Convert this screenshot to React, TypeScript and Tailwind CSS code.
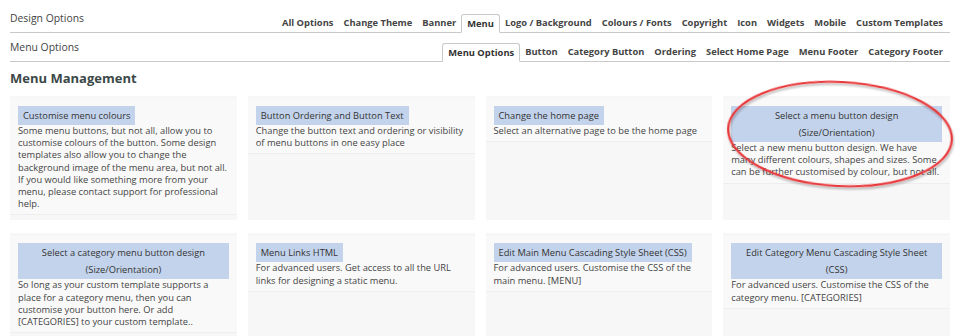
const mainTabs = [
  "All Options",
  "Change Theme",
  "Banner",
  "Menu",
  "Logo / Background",
  "Colours / Fonts",
  "Copyright",
  "Icon",
  "Widgets",
  "Mobile",
  "Custom Templates",
];

const menuTabs = [
  "Menu Options",
  "Button",
  "Category Button",
  "Ordering",
  "Select Home Page",
  "Menu Footer",
  "Category Footer",
];

interface Card {
  title: string;
  text: string;
  narrow?: boolean;
}

const cards: Card[] = [
  {
    title: "Customise menu colours",
    text: "Some menu buttons, but not all, allow you to customise colours of the button. Some design templates also allow you to change the background image of the menu area, but not all. If you would like something more from your menu, please contact support for professional help.",
  },
  {
    title: "Button Ordering and Button Text",
    text: "Change the button text and ordering or visibility of menu buttons in one easy place",
  },
  {
    title: "Change the home page",
    text: "Select an alternative page to be the home page",
  },
  {
    title: "Select a menu button design (Size/Orientation)",
    text: "Select a new menu button design. We have many different colours, shapes and sizes. Some can be further customised by colour, but not all.",
    narrow: true,
  },
  {
    title: "Select a category menu button design (Size/Orientation)",
    text: "So long as your custom template supports a place for a category menu, then you can customise your button here. Or add [CATEGORIES] to your custom template..",
  },
  {
    title: "Menu Links HTML",
    text: "For advanced users. Get access to all the URL links for designing a static menu.",
  },
  {
    title: "Edit Main Menu Cascading Style Sheet (CSS)",
    text: "For advanced users. Customise the CSS of the main menu. [MENU]",
  },
  {
    title: "Edit Category Menu Cascading Style Sheet (CSS)",
    text: "For advanced users. Customise the CSS of the category menu. [CATEGORIES]",
  },
];

function TabRow({ label, tabs, active }: { label: string; tabs: string[]; active: string }) {
  return (
    <div className="flex justify-between items-end h-[25px] border-b border-[#c9c9c9]">
      <div className="self-start text-[10.4px] leading-[20px] text-[#444]">{label}</div>
      <div className="flex items-end mr-[2px]">
        {tabs.map((t) =>
          t === active ? (
            <div
              key={t}
              className="h-[19px] -mb-px px-[5px] leading-[18px] text-[9.35px] font-bold text-[#333] bg-white border border-[#c9c9c9] border-b-white rounded-t-[3px]"
            >
              {t}
            </div>
          ) : (
            <div key={t} className="h-[19px] px-[5px] leading-[19px] text-[9.35px] font-bold text-[#444]">
              {t}
            </div>
          )
        )}
      </div>
    </div>
  );
}

export default function App() {
  return (
    <div className="relative w-[960px] h-[336px] overflow-hidden bg-white px-[10px] pt-[8px] font-['Open_Sans',sans-serif]">
      <TabRow label="Design Options" tabs={mainTabs} active="Menu" />
      <div className="pt-[4px]">
        <TabRow label="Menu Options" tabs={menuTabs} active="Menu Options" />
      </div>

      <h1 className="mt-[6px] mb-[8px] text-[13px] leading-[20px] font-bold text-[#3b4848]">Menu Management</h1>

      <div className="grid grid-cols-4 gap-x-[11px] gap-y-[13px]">
        {cards.map((c) => (
          <div key={c.title} className="bg-[#f7f7f7] pt-[3px] pb-[5px]">
            <div className="bg-[#f9f9f9] border-b border-[#eeeeee] pl-[8px] pr-[6px] pt-[7px] pb-[4px]">
              <div className="w-fit max-w-[calc(100%-2px)] bg-[#c3d3ec] px-[5px] py-[1px] text-center text-[9.3px] leading-[17px] text-[#333]">
                {c.title}
              </div>
              <p className={`text-[9.3px] leading-[12.2px] text-[#444] ${c.narrow ? "pr-[4px]" : ""}`}>{c.text}</p>
            </div>
          </div>
        ))}
      </div>

      <svg className="absolute left-[718px] top-[74px] pointer-events-none" width="242" height="126" viewBox="0 0 242 126">
        <defs>
          <filter id="sh" x="-10%" y="-10%" width="120%" height="130%">
            <feDropShadow dx="1" dy="2" stdDeviation="1.2" floodColor="#000" floodOpacity="0.3" />
          </filter>
        </defs>
        <ellipse
          cx="122"
          cy="60"
          rx="112"
          ry="52"
          transform="rotate(3 122 60)"
          fill="none"
          stroke="#e8383b"
          strokeWidth="2.2"
          filter="url(#sh)"
        />
      </svg>
    </div>
  );
}
